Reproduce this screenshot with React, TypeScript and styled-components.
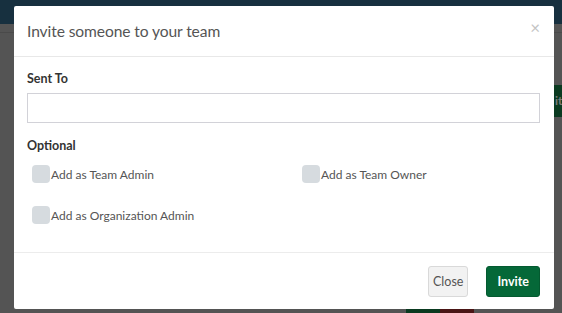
import styled, { createGlobalStyle } from 'styled-components'

const GlobalStyle = createGlobalStyle`
  html, body {
    margin: 0;
    padding: 0;
    background: #545454;
  }
  * {
    box-sizing: border-box;
  }
`

const Page = styled.div`
  position: relative;
  width: 562px;
  height: 313px;
  overflow: hidden;
  background: #545454;
  font-family: Lato, "Noto Sans", sans-serif;
`

const TopBar = styled.div`
  height: 24px;
  background: #17303f;
`

const SubBar = styled.div`
  height: 9px;
  border-bottom: 1px solid #4a4a4a;
`

const PeekButton = styled.div<{ top: number; left: number; width: number; color: string }>`
  position: absolute;
  top: ${p => p.top}px;
  left: ${p => p.left}px;
  width: ${p => p.width}px;
  height: 32px;
  background: ${p => p.color};
  color: #7a7a7a;
  font-size: 12px;
  font-weight: 700;
  line-height: 32px;
  padding-left: 1px;
  white-space: nowrap;
`

const Modal = styled.div`
  position: absolute;
  top: 6px;
  left: 14px;
  width: 540px;
  height: 303px;
  background: #fff;
  border-radius: 2px;
  display: flex;
  flex-direction: column;
`

const Header = styled.div`
  height: 51px;
  padding: 0 13px;
  display: flex;
  align-items: center;
  justify-content: space-between;
  border-bottom: 1px solid #e8e8e8;
`

const Title = styled.h4`
  margin: 0;
  font-size: 15.6px;
  font-weight: 400;
  color: #555;
  letter-spacing: -0.1px;
`

const CloseX = styled.span`
  color: #c4c4c4;
  font-size: 17px;
  line-height: 1;
  margin-top: -8px;
  margin-right: 1px;
`

const Body = styled.div`
  flex: 1;
  padding: 13px 14px 0 13px;
  display: flex;
  flex-direction: column;
`

const FieldLabel = styled.div<{ gap: number }>`
  font-size: 12.5px;
  font-weight: 700;
  color: #333;
  line-height: 18px;
  margin-top: ${p => p.gap}px;
`

const TextInput = styled.input`
  margin-top: 5px;
  height: 30px;
  width: 100%;
  border: 1px solid #d2d2d8;
  border-radius: 0;
  outline: none;
  padding: 0 8px;
  font-family: inherit;
`

const Options = styled.div`
  margin-top: 10px;
  padding-left: 5px;
  display: grid;
  grid-template-columns: 270px 1fr;
  row-gap: 23px;
`

const Option = styled.label`
  display: flex;
  align-items: center;
  height: 18px;
  font-size: 12px;
  color: #555;
`

const Box = styled.span`
  width: 18px;
  height: 18px;
  border-radius: 4px;
  background: #d6dbdf;
  margin-right: 1px;
  flex-shrink: 0;
`

const Footer = styled.div`
  height: 57px;
  border-top: 1px solid #ececec;
  display: flex;
  align-items: center;
  justify-content: flex-end;
  gap: 18px;
  padding: 1px 14px 0 0;
`

const Button = styled.button<{ primary?: boolean }>`
  height: 31px;
  padding: 0 ${p => (p.primary ? 10 : 4)}px;
  border-radius: 3px;
  font-family: inherit;
  font-size: 12.5px;
  font-weight: ${p => (p.primary ? 700 : 400)};
  color: ${p => (p.primary ? '#fff' : '#555')};
  background: ${p => (p.primary ? '#056838' : '#f2f2f2')};
  border: 1px solid ${p => (p.primary ? '#045a30' : '#d9d9d9')};
`

export default function App() {
  return (
    <>
      <GlobalStyle />
      <Page>
        <TopBar />
        <SubBar />
        <PeekButton top={85} left={554} width={8} color="#0a3a20">it</PeekButton>
        <PeekButton top={304} left={406} width={34} color="#0a3a20" />
        <PeekButton top={304} left={440} width={34} color="#4a1515" />
        <Modal>
          <Header>
            <Title>Invite someone to your team</Title>
            <CloseX>×</CloseX>
          </Header>
          <Body>
            <FieldLabel gap={0}>Sent To</FieldLabel>
            <TextInput type="text" />
            <FieldLabel gap={14}>Optional</FieldLabel>
            <Options>
              <Option><Box />Add as Team Admin</Option>
              <Option><Box />Add as Team Owner</Option>
              <Option><Box />Add as Organization Admin</Option>
            </Options>
          </Body>
          <Footer>
            <Button>Close</Button>
            <Button primary>Invite</Button>
          </Footer>
        </Modal>
      </Page>
    </>
  )
}
